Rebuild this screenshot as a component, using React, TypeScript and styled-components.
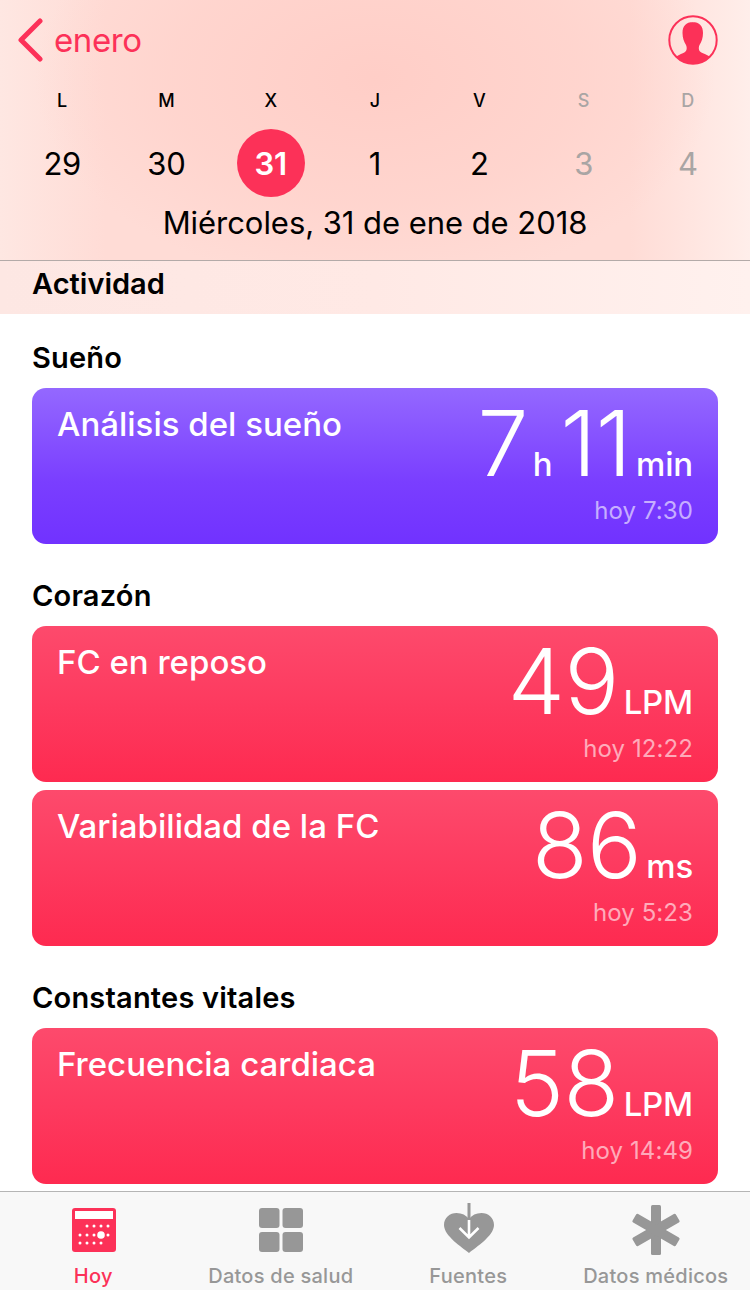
import React from "react";
import styled, { createGlobalStyle } from "styled-components";

const Global = createGlobalStyle`
  html, body { margin: 0; padding: 0; background: #fff; }
  body { font-family: Inter, "Liberation Sans", sans-serif; color: #000; -webkit-font-smoothing: antialiased; }
`;
const Page = styled.div`
  width: 750px; height: 1290px; overflow: hidden; display: flex; flex-direction: column; background: #fff;
`;
const Header = styled.header`
  box-sizing: border-box; height: 261px; flex: none; display: flex; flex-direction: column; border-bottom: 1px solid #b3aaa8;
  background:
    radial-gradient(ellipse 340px 210px at 50% 30%, rgba(255,205,198,.95) 0%, rgba(255,208,201,.6) 60%, rgba(255,208,201,0) 100%),
    linear-gradient(90deg, #fee7e2 0%, #ffdcd6 14%, #ffdcd6 84%, #ffeeea 100%);
`;
const NavRow = styled.div`
  height: 80px; flex: none; display: flex; align-items: center; justify-content: space-between; padding: 0 32px 0 17px;
`;
const Back = styled.div`
  display: flex; align-items: center; gap: 11px; color: #fc3158; font-size: 33px; font-weight: 400; letter-spacing: -.4px;
`;
const Week = styled.div`
  display: grid; grid-template-columns: repeat(7, 1fr); padding: 2px 10px 0; justify-items: center;
`;
const Letter = styled.div<{ $off?: boolean }>`
  height: 36px; display: flex; align-items: center; font-size: 18px; font-weight: 500; color: ${p => p.$off ? "#a9a5a4" : "#000"};
`;
const Day = styled.div<{ $off?: boolean; $sel?: boolean }>`
  width: 68px; height: 68px; margin-top: 11px; border-radius: 50%; display: flex; align-items: center; justify-content: center;
  font-size: 31px; letter-spacing: -.3px;
  font-weight: ${p => p.$sel ? 600 : 400};
  color: ${p => p.$sel ? "#fff" : p.$off ? "#a9a5a4" : "#000"};
  background: ${p => p.$sel ? "#fc3158" : "transparent"};
`;
const DateLine = styled.div`
  text-align: center; font-size: 31px; letter-spacing: -.05px; margin-top: 7px; line-height: 38px;
`;
const ActivityBand = styled.div`
  box-sizing: border-box; height: 53px; flex: none; display: flex; align-items: center; padding: 0 32px 9px; font-size: 29px; font-weight: 600;
  background: linear-gradient(90deg, #fde7e3 0%, #ffe9e5 50%, #fff1ee 100%);
`;
const Content = styled.main`
  flex: 1; min-height: 0; overflow: hidden; padding: 0 32px;
`;
const Section = styled.section`
  display: flex; flex-direction: column; gap: 8px;
`;
const SectionTitle = styled.h2`
  margin: 0 0 -8px; height: 82px; padding: 0 0 12px; box-sizing: border-box; display: flex; align-items: flex-end;
  font-size: 29px; font-weight: 600; line-height: 36px; letter-spacing: .2px;
  ${Section}:first-child & { height: 74px; }
`;
const Card = styled.article<{ $kind: "sleep" | "heart" }>`
  flex: none; height: 156px; box-sizing: border-box; border-radius: 14px; padding: 16px 25px 0; display: flex; justify-content: space-between; color: #fff;
  background: ${p => p.$kind === "sleep"
    ? "linear-gradient(180deg, #9468ff 0%, #7a3eff 60%, #7132ff 100%)"
    : "linear-gradient(180deg, #fd4a6c 0%, #fd3a5f 50%, #fe2a50 100%)"};
`;
const CardTitle = styled.div`
  font-size: 33px; font-weight: 500; line-height: 40px;
`;
const Right = styled.div`
  display: flex; flex-direction: column; align-items: flex-end;
`;
const Value = styled.div`
  display: flex; align-items: baseline; height: 92px; line-height: 92px; margin-top: -7px;
`;
const Big = styled.span`
  font-size: 91px; font-weight: 300; letter-spacing: -.5px;
`;
const Unit = styled.span`
  font-size: 33px; font-weight: 500; margin-left: 5px; margin-right: 8px; letter-spacing: -.2px;
  &:last-child { margin-right: 0; }
`;
const When = styled.div`
  font-size: 24px; color: rgba(255,255,255,.6); line-height: 30px; margin-top: 7px; letter-spacing: .1px;
`;
const TabBar = styled.nav`
  height: 99px; flex: none; box-sizing: border-box; display: grid; grid-template-columns: repeat(4, 1fr); background: #f8f8f8; border-top: 1px solid #b5b5b5;
`;
const Tab = styled.div<{ $on?: boolean }>`
  display: flex; flex-direction: column; align-items: center; color: ${p => p.$on ? "#fc3158" : "#979797"};
`;
const IconBox = styled.div`
  height: 50px; margin-top: 13px; display: flex; align-items: center; justify-content: center;
`;
const TabLabel = styled.div`
  font-size: 20px; font-weight: 500; line-height: 24px; margin-top: 9px; margin-left: -1px; letter-spacing: .25px; white-space: nowrap;
`;

const Chevron = () => (
  <svg width="26" height="44" viewBox="0 0 26 44" fill="none"><path d="M23 3 L4 22 L23 41" stroke="#fc3158" strokeWidth="5" strokeLinecap="round" strokeLinejoin="round" /></svg>
);
const Profile = () => (
  <svg width="50" height="50" viewBox="0 0 50 50">
    <defs><clipPath id="pc"><circle cx="25" cy="25" r="23.5" /></clipPath></defs>
    <circle cx="25" cy="25" r="23.7" fill="none" stroke="#fc3158" strokeWidth="2" />
    <path clipPath="url(#pc)" fill="#fc3158" d="M25 7c-7 0-10.500 4-10.500 11 0 5 1.500 9 3.500 12 1 2 1 5-.5 6.500C15 39 7 40 5 46v6h40v-6c-2-6-10-7-13-9.500-1.500-1.500-1.500-4.500-.5-6.500 2-3 3.500-7 3.500-12 0-7-3.500-11-10.500-11z" />
  </svg>
);
const Dot = ({ x, y }: { x: number; y: number }) => <circle cx={x} cy={y} r="1.500" fill="#fff" />;
const IconHoy = () => (
  <svg width="44" height="44" viewBox="0 0 44 44">
    <rect width="44" height="44" rx="3" fill="#fc3158" />
    <rect x="3" y="3" width="38" height="8" fill="#fff" />
    {[15, 22, 29, 36].map(x => <Dot key={`a${x}`} x={x} y={18} />)}
    {[8, 15, 22, 36].map(x => <Dot key={`b${x}`} x={x} y={27} />)}
    {[8, 15, 22, 29].map(x => <Dot key={`c${x}`} x={x} y={35} />)}
    <circle cx="29" cy="27" r="3.800" fill="#fff" />
  </svg>
);
const IconGrid = () => (
  <svg width="44" height="44" viewBox="0 0 44 44" fill="#979797">
    <rect width="20.500" height="20" rx="3" /><rect x="23.500" width="20.500" height="20" rx="3" />
    <rect y="24" width="20.500" height="20" rx="3" /><rect x="23.500" y="24" width="20.500" height="20" rx="3" />
  </svg>
);
const IconHeart = () => (
  <svg width="50" height="54" viewBox="0 0 50 54">
    <path fill="#979797" d="M25 50C18 44 0 33 0 22 0 14.500 6 10 12.500 10 18 10 22 12 25 16c3-4 7-6 12.500-6C44 10 50 14.500 50 22c0 11-18 22-25 28z" />
    <path fill="none" stroke="#979797" strokeWidth="3" d="M25 0v16" />
    <path fill="none" stroke="#fff" strokeWidth="2.600" d="M25 17v17M15.500 25l9.500 9.500 9.500-9.500" />
  </svg>
);
const IconStar = () => (
  <svg width="50" height="50" viewBox="0 0 50 50" fill="#979797">
    <rect x="20" y="0" width="10" height="50" rx="1.500" />
    <rect x="20" y="0" width="10" height="50" rx="1.500" transform="rotate(60 25 25)" />
    <rect x="20" y="0" width="10" height="50" rx="1.500" transform="rotate(-60 25 25)" />
  </svg>
);

const letters = ["L", "M", "X", "J", "V", "S", "D"];
const days = ["29", "30", "31", "1", "2", "3", "4"];

type Metric = { title: string; parts: [string, string][]; when: string; kind: "sleep" | "heart" };
const MetricCard = ({ title, parts, when, kind }: Metric) => (
  <Card $kind={kind}>
    <CardTitle>{title}</CardTitle>
    <Right>
      <Value>
        {parts.map(([n, u]) => (
          <React.Fragment key={u + n}>
            <Big>{n}</Big>
            <Unit>{u}</Unit>
          </React.Fragment>
        ))}
      </Value>
      <When>{when}</When>
    </Right>
  </Card>
);

const sections: { title: string; cards: Metric[] }[] = [
  { title: "Sueño", cards: [{ title: "Análisis del sueño", parts: [["7", "h"], ["11", "min"]], when: "hoy 7:30", kind: "sleep" }] },
  { title: "Corazón", cards: [
    { title: "FC en reposo", parts: [["49", "LPM"]], when: "hoy 12:22", kind: "heart" },
    { title: "Variabilidad de la FC", parts: [["86", "ms"]], when: "hoy 5:23", kind: "heart" },
  ] },
  { title: "Constantes vitales", cards: [{ title: "Frecuencia cardiaca", parts: [["58", "LPM"]], when: "hoy 14:49", kind: "heart" }] },
];

export default function App() {
  return (
    <Page>
      <Global />
      <Header>
        <NavRow>
          <Back><Chevron />enero</Back>
          <Profile />
        </NavRow>
        <Week>
          {letters.map((l, i) => <Letter key={l} $off={i > 4}>{l}</Letter>)}
          {days.map((d, i) => <Day key={d} $off={i > 4} $sel={i === 2}>{d}</Day>)}
        </Week>
        <DateLine>Miércoles, 31 de ene de 2018</DateLine>
      </Header>
      <ActivityBand>Actividad</ActivityBand>
      <Content>
        {sections.map(s => (
          <Section key={s.title}>
            <SectionTitle>{s.title}</SectionTitle>
            {s.cards.map(c => <MetricCard key={c.title} {...c} />)}
          </Section>
        ))}
      </Content>
      <TabBar>
        <Tab $on><IconBox><IconHoy /></IconBox><TabLabel>Hoy</TabLabel></Tab>
        <Tab><IconBox><IconGrid /></IconBox><TabLabel>Datos de salud</TabLabel></Tab>
        <Tab><IconBox><IconHeart /></IconBox><TabLabel>Fuentes</TabLabel></Tab>
        <Tab><IconBox><IconStar /></IconBox><TabLabel>Datos médicos</TabLabel></Tab>
      </TabBar>
    </Page>
  );
}
